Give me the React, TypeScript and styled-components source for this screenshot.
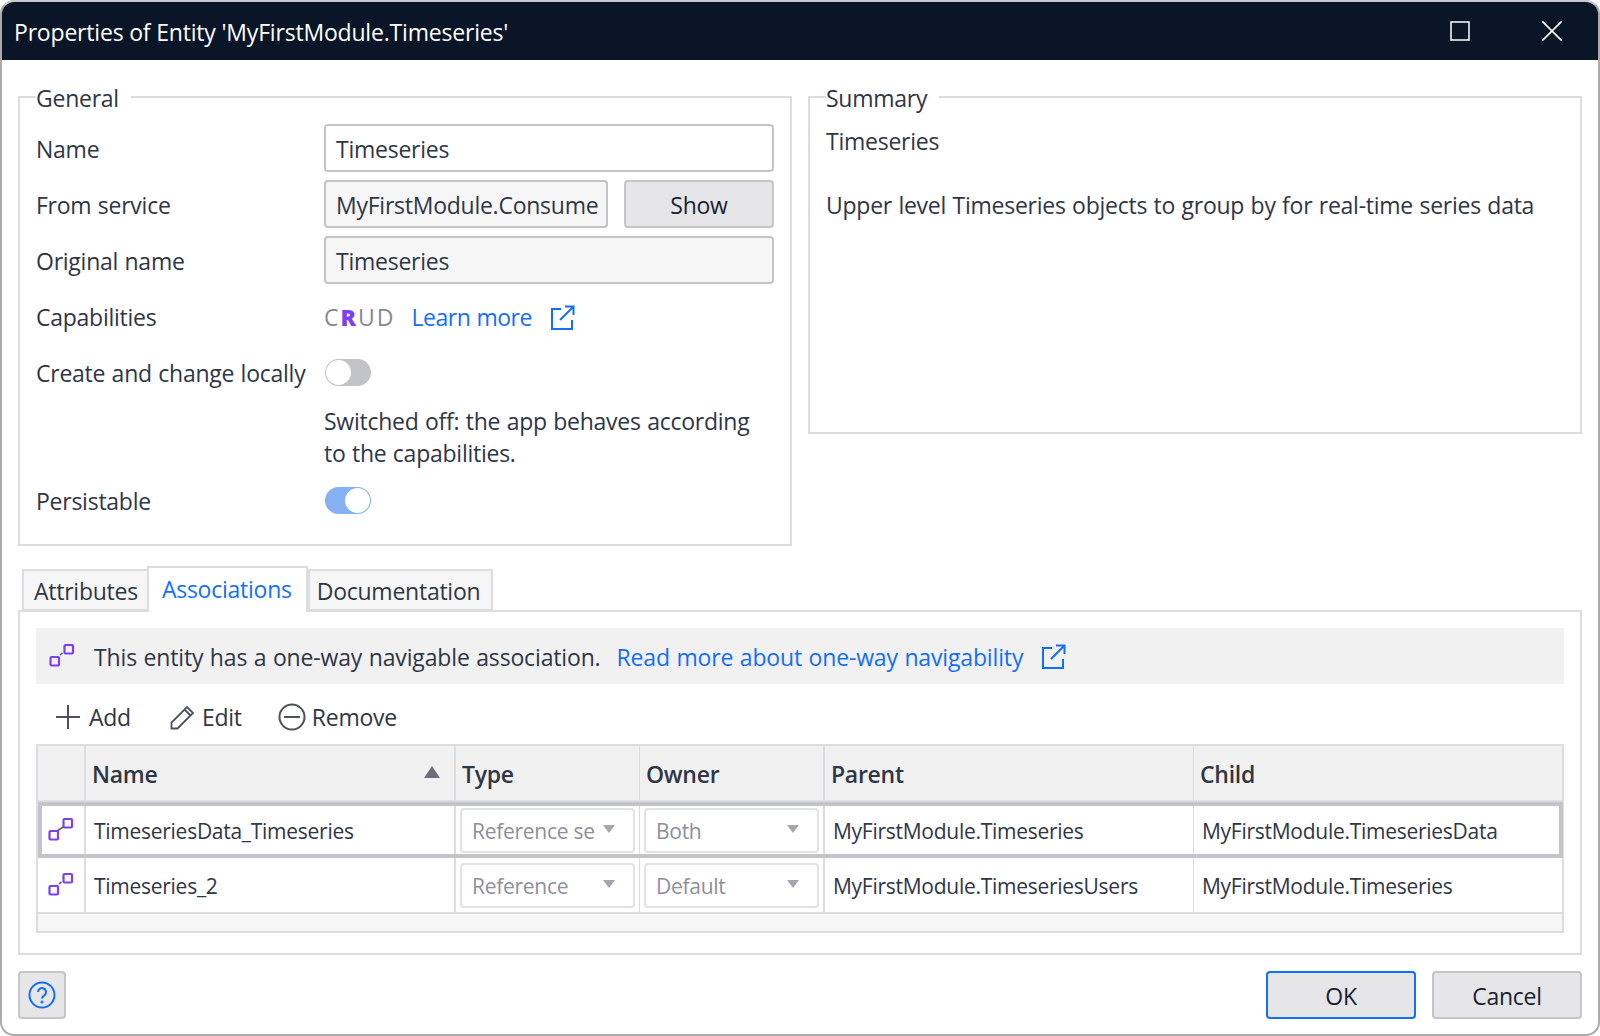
import React from 'react';
import styled, { createGlobalStyle } from 'styled-components';

const FONT = `"Open Sans", "Noto Sans", sans-serif`;
const TEXT = '#2f3646';
const LINE = '#dcdde0';
const BLUE = '#146ff4';
const PURPLE = '#7c3ff2';

const GlobalStyle = createGlobalStyle`
    html, body { margin: 0; padding: 0; background: #fff; }
    * { box-sizing: border-box; }
    body { font-family: ${FONT}; color: ${TEXT}; font-size: 23px; letter-spacing: -0.25px; word-spacing: 0.7px; }
`;

const Frame = styled.div`
    width: 1600px;
    height: 1036px;
    border: 2px solid #ababab;
    border-top-color: #c8c8c8;
    border-radius: 14px;
    overflow: hidden;
    display: flex;
    flex-direction: column;
    background: #fff;
`;

const TitleBar = styled.div`
    height: 58px;
    flex: none;
    background: #0a1627;
    color: #fff;
    display: flex;
    align-items: center;
    padding: 0 36px 0 12px;
    font-size: 23px;
`;

const TitleText = styled.div`
    flex: 1;
    padding-top: 2px;
    letter-spacing: -0.19px;
    word-spacing: 0;
`;

const WindowButtons = styled.div`
    display: flex;
    align-items: center;
    gap: 72px;
`;

const Content = styled.div`
    flex: 1;
    padding: 0 16px;
    display: flex;
    flex-direction: column;
`;

const TopRow = styled.div`
    display: grid;
    grid-template-columns: 774px 774px;
    gap: 16px;
    align-items: start;
    margin-top: 22px;
`;

const Group = styled.fieldset<{ $height: number }>`
    height: ${(p) => p.$height}px;
    margin: 0;
    padding: 0 16px;
    border: 2px solid ${LINE};
    min-width: 0;
`;

const GroupTitle = styled.legend`
    padding: 2px 12px 0 0;
    margin-left: 0;
    line-height: 28px;
`;

const FieldGrid = styled.div`
    display: grid;
    grid-template-columns: 288px 450px;
    margin-top: 12px;
`;

const Label = styled.div`
    height: 48px;
    margin-bottom: 8px;
    display: flex;
    align-items: center;
    padding-top: 2px;
`;

const Control = styled.div`
    height: 48px;
    margin-bottom: 8px;
    display: flex;
    align-items: center;
    gap: 16px;
`;

const Input = styled.div<{ $disabled?: boolean; $width?: number }>`
    height: 48px;
    width: ${(p) => (p.$width ? `${p.$width}px` : '100%')};
    flex: none;
    background: ${(p) => (p.$disabled ? '#f6f6f6' : '#fff')};
    border: 2px solid #c4c5cb;
    border-radius: 4px;
    padding: 2px 10px 0;
    display: flex;
    align-items: center;
    overflow: hidden;
    white-space: nowrap;
`;

const Button = styled.button<{ $width: number; $primary?: boolean }>`
    width: ${(p) => p.$width}px;
    height: 48px;
    flex: none;
    background: #e6e6e9;
    border: 2px solid ${(p) => (p.$primary ? BLUE : '#c4c5cb')};
    border-radius: 4px;
    font: inherit;
    letter-spacing: inherit;
    color: #1b2130;
    padding: 2px 0 0;
    display: flex;
    align-items: center;
    justify-content: center;
`;

const Crud = styled.span`
    letter-spacing: 2px;
    color: #858995;
    margin-right: 16px;
    b {
        color: ${PURPLE};
        font-weight: 800;
    }
`;

const Link = styled.span`
    color: ${BLUE};
`;

const LearnMore = styled(Link)`
    letter-spacing: -0.5px;
`;

const LinkIcon = styled.svg`
    margin-left: 18px;
    flex: none;
`;

const Inline = styled.div`
    display: flex;
    align-items: center;
    padding-top: 2px;
`;

const Toggle = styled.div<{ $on?: boolean }>`
    width: 46px;
    height: 27px;
    margin-left: 1px;
    border-radius: 14px;
    background: ${(p) => (p.$on ? '#85b1f2' : '#c2c3c8')};
    position: relative;
    &::after {
        content: '';
        position: absolute;
        top: 1px;
        ${(p) => (p.$on ? 'right: 1px;' : 'left: 1px;')}
        width: 25px;
        height: 25px;
        border-radius: 50%;
        background: #fff;
    }
`;

const Hint = styled.div`
    grid-column: 2;
    line-height: 32px;
    height: 64px;
    margin-bottom: 8px;
    padding-top: 1px;
`;

const SummaryText = styled.div`
    margin-top: 13px;
    line-height: 32px;
    p {
        margin: 0 0 32px;
    }
`;

const Tabs = styled.div`
    display: flex;
    align-items: flex-end;
    margin: 19px 0 0 4px;
    height: 46px;
    position: relative;
    z-index: 1;
`;

const Tab = styled.div<{ $active?: boolean; $inset?: number }>`
    height: ${(p) => (p.$active ? 46 : 42)}px;
    margin-bottom: ${(p) => (p.$active ? -1 : 0)}px;
    padding: ${(p) => (p.$active ? '0 14px 2px 13px' : `2px ${p.$inset ? 11 : 10}px 0 ${p.$inset ?? 10}px`)};
    display: flex;
    align-items: center;
    background: ${(p) => (p.$active ? '#fff' : '#f6f6f6')};
    color: ${(p) => (p.$active ? BLUE : TEXT)};
    border: 2px solid ${LINE};
    border-bottom: ${(p) => (p.$active ? '0' : `2px solid ${LINE}`)};
    margin-left: ${(p) => (p.$active ? -3 : 0)}px;
`;

const TabPanel = styled.div`
    height: 345px;
    margin-top: -1px;
    border: 2px solid ${LINE};
    padding: 16px 16px 0;
`;

const InfoBar = styled.div`
    height: 56px;
    background: #f1f1f2;
    display: flex;
    align-items: center;
    padding: 0 13px;
    letter-spacing: -0.15px;
`;

const InfoText = styled.span`
    margin: 2px 16px 0 19px;
`;

const InfoLink = styled(Link)`
    margin-top: 2px;
`;

const Toolbar = styled.div`
    height: 60px;
    display: flex;
    align-items: center;
    padding: 6px 0 0 20px;
`;

const ToolButton = styled.div<{ $gap: number; $after: number }>`
    display: flex;
    align-items: center;
    gap: ${(p) => p.$gap}px;
    margin-right: ${(p) => p.$after}px;
`;

const Table = styled.div`
    border: 2px solid ${LINE};
    font-size: 21px;
    letter-spacing: -0.27px;
    word-spacing: 0;
`;

const COLUMNS = '48px 370px 184px 185px 369px 1fr';

const HeaderRow = styled.div`
    display: grid;
    grid-template-columns: ${COLUMNS};
    height: 56px;
    background: #f1f1f2;
    border-bottom: 2px solid ${LINE};
    font-size: 23px;
    font-weight: 600;
`;

const HeaderCell = styled.div`
    display: flex;
    align-items: center;
    justify-content: space-between;
    padding: 2px 14px 0 6px;
    border-right: 2px solid ${LINE};
    &:nth-child(3),
    &:nth-child(5) {
        border-right-width: 1px;
    }
    &:last-child {
        border-right: 0;
    }
`;

const Row = styled.div<{ $selected?: boolean }>`
    display: grid;
    grid-template-columns: ${COLUMNS};
    height: 56px;
    border-bottom: 2px solid ${LINE};
    position: relative;
    ${(p) => p.$selected && `
        border-bottom: 0;
        &::after {
            content: '';
            position: absolute;
            inset: 0 -1px 0 0;
            border: 4px solid #c3c4ca;
            pointer-events: none;
        }
    `}
`;

const Cell = styled.div<{ $center?: boolean }>`
    display: flex;
    align-items: center;
    justify-content: ${(p) => (p.$center ? 'center' : 'flex-start')};
    padding: ${(p) => (p.$center ? '0' : '2px 8px 0')};
    border-right: 2px solid ${LINE};
    white-space: nowrap;
    overflow: hidden;
    &:nth-child(3),
    &:nth-child(5) {
        border-right-width: 1px;
    }
    &:last-child {
        border-right: 0;
    }
`;

const SelectCell = styled(Cell)`
    padding: 0 4px;
`;

const Select = styled.div`
    width: 100%;
    height: 45px;
    border: 2px solid #e1e2e6;
    border-radius: 4px;
    padding: 2px 10px 0;
    display: flex;
    align-items: center;
    justify-content: space-between;
    color: #8d909a;
    overflow: hidden;
    &::after {
        content: '';
        flex: none;
        margin: 0 8px 4px 0;
        border-left: 6px solid transparent;
        border-right: 6px solid transparent;
        border-top: 8px solid #a4a6ad;
    }
`;

const SortArrow = styled.span`
    border-left: 8px solid transparent;
    border-right: 8px solid transparent;
    border-bottom: 12px solid #6c6f7a;
    margin-bottom: 4px;
`;

const TableFooter = styled.div`
    height: 17px;
    background: #f6f6f6;
`;

const Footer = styled.div`
    display: flex;
    align-items: center;
    gap: 16px;
    margin-top: 16px;
`;

const HelpButton = styled(Button)`
    margin-right: auto;
    padding: 0;
`;

const AssocIcon = ({ solid }: { solid?: boolean }) => (
    <svg width="26" height="26" viewBox="0 0 26 26" fill="none">
        <rect x="1.5" y="14" width="8.5" height="8.5" rx="1" stroke={PURPLE} strokeWidth="2.2" />
        <rect x="15.5" y="2" width="8.5" height="8.5" rx="1" stroke={PURPLE} strokeWidth="2.2" />
        {solid ? (
            <path d="M9 14L16 9.5" stroke="#5b5f6b" strokeWidth="1.6" />
        ) : (
            <path d="M11 12L13.5 9.8" stroke="#5b5f6b" strokeWidth="1.6" />
        )}
    </svg>
);

const ExternalIcon = () => (
    <LinkIcon width="25" height="25" viewBox="0 0 25 25" fill="none" stroke={BLUE} strokeWidth="2">
        <path d="M11 4H2v20h20v-9" />
        <path d="M10 15L23.5 1.5M15 1.5h8.5V10" />
    </LinkIcon>
);

const App = () => (
    <Frame>
        <GlobalStyle />
        <TitleBar>
            <TitleText>Properties of Entity 'MyFirstModule.Timeseries'</TitleText>
            <WindowButtons>
                <svg width="20" height="20" viewBox="0 0 20 20" fill="none" stroke="#fff" strokeWidth="1.5">
                    <rect x="1" y="1" width="18" height="18" />
                </svg>
                <svg width="20" height="20" viewBox="0 0 20 20" fill="none" stroke="#fff" strokeWidth="1.6">
                    <path d="M0 0L20 20M20 0L0 20" />
                </svg>
            </WindowButtons>
        </TitleBar>
        <Content>
            <TopRow>
                <Group $height={464}>
                    <GroupTitle>General</GroupTitle>
                    <FieldGrid>
                        <Label>Name</Label>
                        <Control><Input>Timeseries</Input></Control>
                        <Label>From service</Label>
                        <Control>
                            <Input $disabled $width={284}>MyFirstModule.Consume</Input>
                            <Button $width={150}>Show</Button>
                        </Control>
                        <Label>Original name</Label>
                        <Control><Input $disabled>Timeseries</Input></Control>
                        <Label>Capabilities</Label>
                        <Control>
                            <Inline>
                                <Crud>C<b>R</b>UD</Crud>
                                <LearnMore>Learn more</LearnMore>
                                <ExternalIcon />
                            </Inline>
                        </Control>
                        <Label>Create and change locally</Label>
                        <Control><Toggle /></Control>
                        <Hint>Switched off: the app behaves according<br />to the capabilities.</Hint>
                        <Label>Persistable</Label>
                        <Control><Toggle $on /></Control>
                    </FieldGrid>
                </Group>
                <Group $height={352}>
                    <GroupTitle>Summary</GroupTitle>
                    <SummaryText>
                        <p>Timeseries</p>
                        <p>Upper level Timeseries objects to group by for real-time series data</p>
                    </SummaryText>
                </Group>
            </TopRow>
            <Tabs>
                <Tab>Attributes</Tab>
                <Tab $active>Associations</Tab>
                <Tab $inset={7}>Documentation</Tab>
            </Tabs>
            <TabPanel>
                <InfoBar>
                    <AssocIcon />
                    <InfoText>This entity has a one-way navigable association.</InfoText>
                    <InfoLink>Read more about one-way navigability</InfoLink>
                    <ExternalIcon />
                </InfoBar>
                <Toolbar>
                    <ToolButton $gap={9} $after={39}>
                        <svg width="24" height="24" viewBox="0 0 24 24" stroke="#4b505c" strokeWidth="2">
                            <path d="M12 0v24M0 12h24" />
                        </svg>
                        Add
                    </ToolButton>
                    <ToolButton $gap={7} $after={36}>
                        <svg width="25" height="25" viewBox="0 0 25 25" fill="none" stroke="#4b505c" strokeWidth="1.8">
                            <path d="M1.5 23.5v-6L17 2l6 6L7.5 23.5zM14.5 4.5l6 6" />
                        </svg>
                        Edit
                    </ToolButton>
                    <ToolButton $gap={6} $after={0}>
                        <svg width="28" height="28" viewBox="0 0 28 28" fill="none" stroke="#4b505c" strokeWidth="2">
                            <circle cx="14" cy="14" r="12.5" />
                            <path d="M6 14h16" />
                        </svg>
                        Remove
                    </ToolButton>
                </Toolbar>
                <Table>
                    <HeaderRow>
                        <HeaderCell />
                        <HeaderCell>Name<SortArrow /></HeaderCell>
                        <HeaderCell>Type</HeaderCell>
                        <HeaderCell>Owner</HeaderCell>
                        <HeaderCell>Parent</HeaderCell>
                        <HeaderCell>Child</HeaderCell>
                    </HeaderRow>
                    <Row $selected>
                        <Cell $center><AssocIcon solid /></Cell>
                        <Cell>TimeseriesData_Timeseries</Cell>
                        <SelectCell><Select>Reference se</Select></SelectCell>
                        <SelectCell><Select>Both</Select></SelectCell>
                        <Cell>MyFirstModule.Timeseries</Cell>
                        <Cell>MyFirstModule.TimeseriesData</Cell>
                    </Row>
                    <Row>
                        <Cell $center><AssocIcon /></Cell>
                        <Cell>Timeseries_2</Cell>
                        <SelectCell><Select>Reference</Select></SelectCell>
                        <SelectCell><Select>Default</Select></SelectCell>
                        <Cell>MyFirstModule.TimeseriesUsers</Cell>
                        <Cell>MyFirstModule.Timeseries</Cell>
                    </Row>
                    <TableFooter />
                </Table>
            </TabPanel>
            <Footer>
                <HelpButton $width={48}>
                    <svg width="28" height="28" viewBox="0 0 28 28" fill="none" stroke={BLUE} strokeWidth="2">
                        <circle cx="14" cy="14" r="12.5" />
                        <path d="M10 11a4 4 0 1 1 6.5 3.2c-1.6 1.2-2.5 1.8-2.5 3.3" />
                        <circle cx="14" cy="21" r="0.6" />
                    </svg>
                </HelpButton>
                <Button $width={150} $primary>OK</Button>
                <Button $width={150}>Cancel</Button>
            </Footer>
        </Content>
    </Frame>
);

export default App;
